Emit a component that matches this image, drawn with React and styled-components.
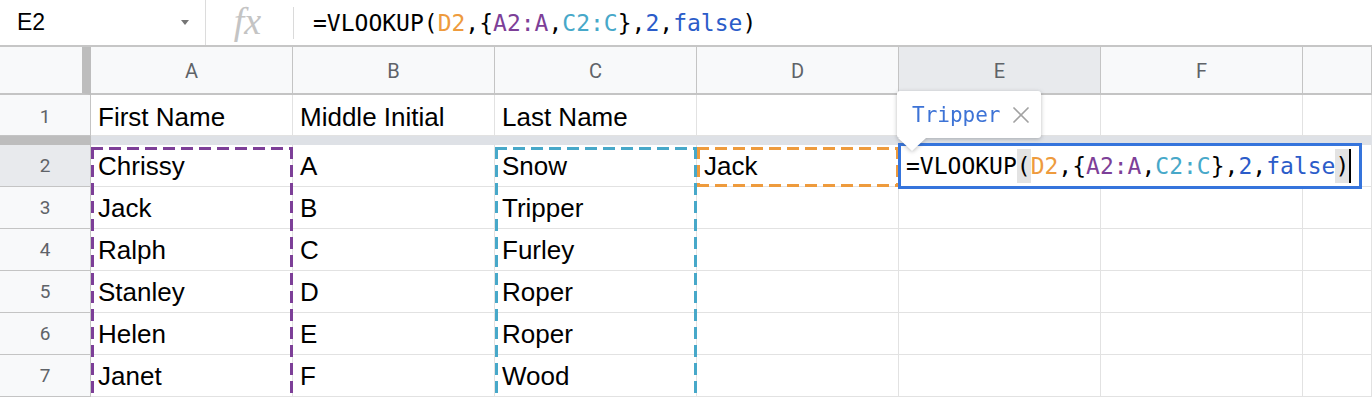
import React from "react";
import styled, { createGlobalStyle, css } from "styled-components";
import { X } from "lucide-react";

const COLORS = {
  orange: "#ee9b3d",
  purple: "#7d3f98",
  teal: "#47a8c9",
  blue: "#2b5cc9",
  select: "#3574dc",
};

const GlobalStyle = createGlobalStyle`
  html, body {
    margin: 0;
    padding: 0;
    background: #fff;
    overflow: hidden;
  }
  body {
    font-family: "Liberation Sans", Arial, sans-serif;
  }
`;

const Page = styled.div`
  width: 1372px;
  height: 398px;
  overflow: hidden;
  background: #fff;
`;

/* ---------- formula bar ---------- */

const FormulaBar = styled.div`
  display: flex;
  align-items: stretch;
  height: 47px;
  box-sizing: border-box;
  border-bottom: 2px solid #c6c6c6;
`;

const NameBox = styled.div`
  width: 206px;
  box-sizing: border-box;
  display: flex;
  align-items: center;
  justify-content: space-between;
  padding: 0 16px 0 17px;
  font-size: 23px;
  color: #000;
  border-right: 1px solid #dcdcdc;
`;

const Caret = styled.span`
  width: 0;
  height: 0;
  border-left: 4px solid transparent;
  border-right: 4px solid transparent;
  border-top: 5px solid #757575;
`;

const FxBox = styled.div`
  width: 87px;
  display: flex;
  align-items: center;
  justify-content: center;
  font-family: "Liberation Serif", "Times New Roman", serif;
  font-style: italic;
  font-size: 38px;
  color: #c4c4c4;
  padding: 0 4px 4px 0;
  box-sizing: border-box;
`;

const Divider = styled.div`
  width: 1px;
  margin: 7px 0 6px;
  background: #dadada;
`;

const FormulaText = styled.div`
  display: flex;
  align-items: center;
  padding-left: 19px;
  font-family: "DejaVu Sans Mono", "Liberation Mono", monospace;
  font-size: 23px;
  color: #000;
  white-space: pre;
`;

const Tok = styled.span`
  color: ${(p) => p.$c || "inherit"};
`;

const Paren = styled.span`
  display: inline-block;
  line-height: 34px;
  background: ${(p) => (p.$hl ? "#e3e3e3" : "transparent")};
`;

const Cursor = styled.span`
  display: inline-block;
  width: 2px;
  height: 34px;
  background: #000;
`;

/* ---------- grid ---------- */

const Sheet = styled.div`
  display: grid;
  grid-template-columns: 91px repeat(6, 202px) 1fr;
  grid-template-rows: 48px 41px 9px repeat(6, 42px);
  position: relative;
`;

const place = css`
  grid-row: ${(p) => p.$r};
  grid-column: ${(p) => p.$c};
`;

const Corner = styled.div`
  ${place};
  background: #f8f9fa;
  border-right: 9px solid #bdbdbd;
  border-bottom: 2px solid #c4c4c4;
  box-sizing: border-box;
`;

const ColHeader = styled.div`
  ${place};
  display: flex;
  align-items: center;
  justify-content: center;
  background: ${(p) => (p.$active ? "#e8eaed" : "#f8f9fa")};
  border-right: 1px solid #c4c4c4;
  border-bottom: 2px solid #c4c4c4;
  box-sizing: border-box;
  font-family: Roboto, "Liberation Sans", sans-serif;
  font-size: 20px;
  color: #5f6368;
  padding-top: 2px;
`;

const RowHeader = styled.div`
  ${place};
  display: flex;
  align-items: center;
  justify-content: center;
  background: ${(p) => (p.$active ? "#e8eaed" : "#f8f9fa")};
  border-right: 1px solid #c4c4c4;
  border-bottom: 1px solid #c4c4c4;
  box-sizing: border-box;
  font-family: Roboto, "Liberation Sans", sans-serif;
  font-size: 19px;
  color: #5f6368;
  padding-top: ${(p) => (p.$first ? "3px" : "0")};
`;

const Band = styled.div`
  ${place};
  background: ${(p) => (p.$dark ? "#bdbdbd" : "#dee1e6")};
`;

const Cell = styled.div`
  ${place};
  display: flex;
  align-items: center;
  padding: ${(p) => (p.$first ? "4px" : "1px")} 0 0 7px;
  border-right: 1px solid #e2e2e2;
  border-bottom: 1px solid #e2e2e2;
  box-sizing: border-box;
  font-family: "Liberation Sans", Arial, sans-serif;
  font-size: 26px;
  color: #000;
  white-space: nowrap;
  overflow: hidden;
`;

const dash = (c, dir) =>
  `repeating-linear-gradient(${dir}, ${c} 0 12px, transparent 12px 18px)`;

const Marquee = styled.div`
  ${place};
  margin-top: 2px;
  margin-bottom: ${(p) => (p.$open ? "-20px" : "0")};
  pointer-events: none;
  z-index: 2;
  background: ${(p) => dash(p.$color, "90deg")} left top / 100% 3px no-repeat,
    ${(p) => dash(p.$color, "90deg")} left bottom / 100% ${(p) => (p.$open ? "0" : "3px")} no-repeat,
    ${(p) => dash(p.$color, "180deg")} left top / 3px 100% no-repeat,
    ${(p) => dash(p.$color, "180deg")} right top / 3px 100% no-repeat;
`;

const Editor = styled.div`
  grid-row: 4;
  grid-column: 6 / 9;
  justify-self: start;
  align-self: start;
  position: relative;
  z-index: 3;
  margin: -2px 0 0 -1px;
  height: 46px;
  box-sizing: border-box;
  display: flex;
  align-items: center;
  padding: 0 8px 0 5px;
  border: 3px solid ${COLORS.select};
  background: #fff;
  font-family: "DejaVu Sans Mono", "Liberation Mono", monospace;
  font-size: 23px;
  color: #000;
  white-space: pre;
`;

const Tooltip = styled.div`
  position: absolute;
  left: -4px;
  bottom: calc(100% + 8px);
  height: 47px;
  display: flex;
  align-items: center;
  padding: 0 6px 0 15px;
  background: #fff;
  border-radius: 3px;
  filter: drop-shadow(0 1px 2px rgba(60, 64, 67, 0.35));
  font-family: "DejaVu Sans Mono", "Liberation Mono", monospace;
  font-size: 21px;
  color: #3d73d6;

  &::after {
    content: "";
    position: absolute;
    left: 1px;
    top: 100%;
    border-left: 14px solid transparent;
    border-right: 14px solid transparent;
    border-top: 13px solid #fff;
  }
`;

const Close = styled.span`
  display: flex;
  margin-left: 6px;
  color: #a2a2a2;
`;

const rows = [
  ["First Name", "Middle Initial", "Last Name", "", "", ""],
  ["Chrissy", "A", "Snow", "Jack", "", ""],
  ["Jack", "B", "Tripper", "", "", ""],
  ["Ralph", "C", "Furley", "", "", ""],
  ["Stanley", "D", "Roper", "", "", ""],
  ["Helen", "E", "Roper", "", "", ""],
  ["Janet", "F", "Wood", "", "", ""],
];

const letters = ["A", "B", "C", "D", "E", "F", ""];

// grid row for a sheet row (1-based): header = 1, row 1 = 2, band = 3, rows 2.. = 4..
const gridRow = (n) => (n === 1 ? 2 : n + 2);

function Formula({ editing }) {
  return (
    <>
      =VLOOKUP<Paren $hl={editing}>(</Paren>
      <Tok $c={COLORS.orange}>D2</Tok>,{"{"}
      <Tok $c={COLORS.purple}>A2:A</Tok>,<Tok $c={COLORS.teal}>C2:C</Tok>
      {"}"},<Tok $c={COLORS.blue}>2</Tok>,<Tok $c={COLORS.blue}>false</Tok>
      <Paren $hl={editing}>)</Paren>
      {editing && <Cursor />}
    </>
  );
}

export default function App() {
  return (
    <Page>
      <GlobalStyle />
      <FormulaBar>
        <NameBox>
          E2
          <Caret />
        </NameBox>
        <FxBox>fx</FxBox>
        <Divider />
        <FormulaText>
          <Formula />
        </FormulaText>
      </FormulaBar>

      <Sheet>
        <Corner $r={1} $c={1} />
        {letters.map((l, i) => (
          <ColHeader key={i} $r={1} $c={i + 2} $active={l === "E"}>
            {l}
          </ColHeader>
        ))}

        <Band $r={3} $c={1} $dark />
        <Band $r={3} $c="2 / -1" />

        {rows.map((row, ri) => {
          const r = gridRow(ri + 1);
          return (
            <React.Fragment key={ri}>
              <RowHeader $r={r} $c={1} $active={ri === 1} $first={ri === 0}>
                {ri + 1}
              </RowHeader>
              {[...row, ""].map((v, ci) => (
                <Cell key={ci} $r={r} $c={ci + 2} $first={ri === 0}>
                  {v}
                </Cell>
              ))}
            </React.Fragment>
          );
        })}

        <Marquee $r="4 / 10" $c={2} $color={COLORS.purple} $open />
        <Marquee $r="4 / 10" $c={4} $color={COLORS.teal} $open />
        <Marquee $r={4} $c={5} $color={COLORS.orange} />

        <Editor>
          <Tooltip>
            Tripper
            <Close>
              <X size={28} strokeWidth={1.5} />
            </Close>
          </Tooltip>
          <Formula editing />
        </Editor>
      </Sheet>
    </Page>
  );
}
